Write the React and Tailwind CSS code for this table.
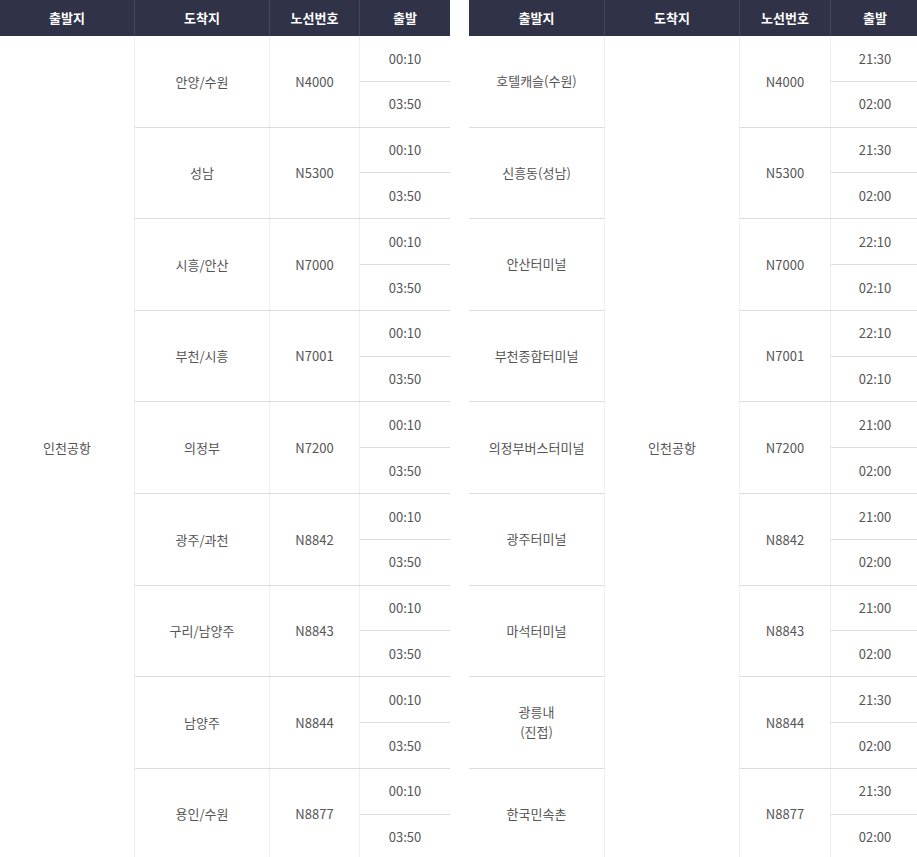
import React from "react";

const left = [
  { dest: "안양/수원", route: "N4000", times: ["00:10", "03:50"] },
  { dest: "성남", route: "N5300", times: ["00:10", "03:50"] },
  { dest: "시흥/안산", route: "N7000", times: ["00:10", "03:50"] },
  { dest: "부천/시흥", route: "N7001", times: ["00:10", "03:50"] },
  { dest: "의정부", route: "N7200", times: ["00:10", "03:50"] },
  { dest: "광주/과천", route: "N8842", times: ["00:10", "03:50"] },
  { dest: "구리/남양주", route: "N8843", times: ["00:10", "03:50"] },
  { dest: "남양주", route: "N8844", times: ["00:10", "03:50"] },
  { dest: "용인/수원", route: "N8877", times: ["00:10", "03:50"] },
];

const right = [
  { from: ["호텔캐슬(수원)"], route: "N4000", times: ["21:30", "02:00"] },
  { from: ["신흥동(성남)"], route: "N5300", times: ["21:30", "02:00"] },
  { from: ["안산터미널"], route: "N7000", times: ["22:10", "02:10"] },
  { from: ["부천종합터미널"], route: "N7001", times: ["22:10", "02:10"] },
  { from: ["의정부버스터미널"], route: "N7200", times: ["21:00", "02:00"] },
  { from: ["광주터미널"], route: "N8842", times: ["21:00", "02:00"] },
  { from: ["마석터미널"], route: "N8843", times: ["21:00", "02:00"] },
  { from: ["광릉내", "(진접)"], route: "N8844", times: ["21:30", "02:00"] },
  { from: ["한국민속촌"], route: "N8877", times: ["21:30", "02:00"] },
];

function Header({ widths }) {
  const labels = ["출발지", "도착지", "노선번호", "출발"];
  return (
    <div className="flex h-[36px] bg-[#303247] text-[13px] font-bold text-white">
      {labels.map((l, i) => (
        <div
          key={l}
          className={
            "flex items-center justify-center " +
            widths[i] +
            (i < 3 ? " border-r border-[#45475b]" : "")
          }
        >
          {l}
        </div>
      ))}
    </div>
  );
}

function Times({ times, w }) {
  return (
    <div className={"flex flex-col " + w}>
      <div className="flex h-[45.8px] items-center justify-center border-b border-[#dcdcdc]">
        {times[0]}
      </div>
      <div className="flex flex-1 items-center justify-center">{times[1]}</div>
    </div>
  );
}

export default function App() {
  const lw = ["w-[135px]", "w-[135px]", "w-[90px]", "w-[90px]"];
  const rw = ["w-[136px]", "w-[135px]", "w-[91px]", "w-[88px]"];
  return (
    <div
      className="flex h-[857px] w-[917px] gap-[19px] overflow-hidden bg-white text-[13px] text-[#555]"
      style={{ fontFamily: '"Noto Sans CJK KR", "Noto Sans", sans-serif' }}
    >
      {/* left table */}
      <div className="w-[450px] shrink-0">
        <Header widths={lw} />
        <div className="flex">
          <div className="flex h-[824.2px] w-[135px] items-center justify-center border-r border-[#eeeeee]">
            인천공항
          </div>
          <div className="flex flex-col">
            {left.map((r) => (
              <div key={r.route} className="flex h-[91.6px] border-b border-[#dcdcdc]">
                <div className="flex w-[135px] items-center justify-center border-r border-[#eeeeee]">
                  {r.dest}
                </div>
                <div className="flex w-[90px] items-center justify-center border-r border-[#eeeeee]">
                  {r.route}
                </div>
                <Times times={r.times} w="w-[90px]" />
              </div>
            ))}
          </div>
        </div>
      </div>
      {/* right table */}
      <div className="w-[450px] shrink-0">
        <Header widths={rw} />
        <div className="flex">
          <div className="flex w-[136px] flex-col border-r border-[#eeeeee]">
            {right.map((r) => (
              <div
                key={r.route}
                className="flex h-[91.6px] flex-col items-center justify-center border-b border-[#dcdcdc] leading-[20px]"
              >
                {r.from.map((t) => (
                  <span key={t}>{t}</span>
                ))}
              </div>
            ))}
          </div>
          <div className="flex h-[824.2px] w-[135px] items-center justify-center border-r border-[#eeeeee]">
            인천공항
          </div>
          <div className="flex flex-col">
            {right.map((r) => (
              <div key={r.route} className="flex h-[91.6px] border-b border-[#dcdcdc]">
                <div className="flex w-[91px] items-center justify-center border-r border-[#eeeeee]">
                  {r.route}
                </div>
                <Times times={r.times} w="w-[88px]" />
              </div>
            ))}
          </div>
        </div>
      </div>
    </div>
  );
}
